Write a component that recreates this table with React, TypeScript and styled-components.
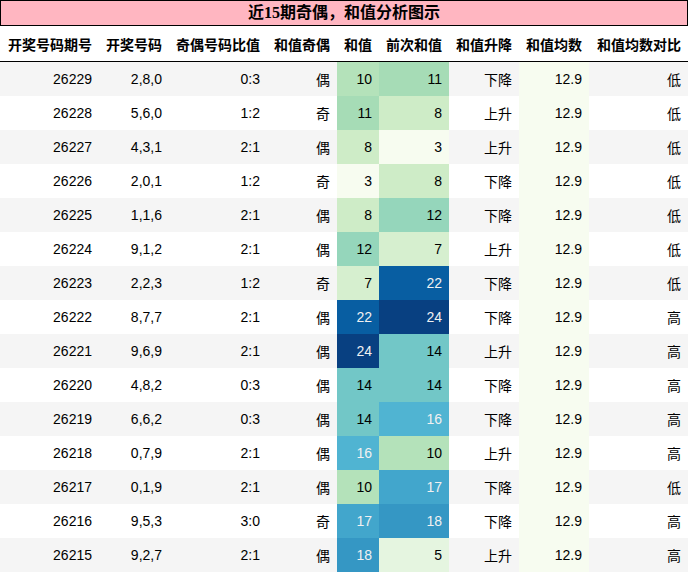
import React from "react";
import styled, { createGlobalStyle } from "styled-components";

const Global = createGlobalStyle`
  html, body { margin: 0; padding: 0; background: #ffffff; }
  body { font-family: "Liberation Sans", "Noto Sans CJK SC", Arial, sans-serif; }
`;

const Wrapper = styled.div`
  width: 688px;
`;

const Title = styled.div`
  box-sizing: border-box;
  height: 26px;
  border: 1px solid #000;
  background: #ffb6c1;
  color: #000;
  font-family: "Liberation Serif", "Noto Sans CJK SC", serif;
  font-weight: bold;
  font-size: 16px;
  line-height: 24px;
  text-align: center;
`;

const Table = styled.table`
  width: 688px;
  border-collapse: collapse;
  border-spacing: 0;
  table-layout: fixed;
`;

const Col = styled.col<{ $w: number }>`
  width: ${(p) => p.$w}px;
`;

const HeadCell = styled.th`
  height: 35px;
  padding: 0 7px 0 0;
  text-align: right;
  vertical-align: middle;
  font-family: "Liberation Sans", "Noto Sans CJK SC", sans-serif;
  font-size: 14px;
  font-weight: bold;
  color: #000;
  white-space: nowrap;
  border-bottom: 1px solid #000;
`;

const Row = styled.tr`
  &:nth-child(odd) { background: #f5f5f5; }
  &:nth-child(even) { background: #ffffff; }
`;

const Cell = styled.td`
  height: 34px;
  padding: 0 7px 0 0;
  text-align: right;
  vertical-align: middle;
  font-size: 14px;
  color: #000;
  white-space: nowrap;
`;

const GNBU = [
  [247, 252, 240],
  [224, 243, 219],
  [204, 235, 197],
  [168, 221, 181],
  [123, 204, 196],
  [78, 179, 211],
  [43, 140, 190],
  [8, 104, 172],
  [8, 64, 129],
];

function gnbu(t: number): [number, number, number] {
  const x = Math.max(0, Math.min(1, t)) * 8;
  const i = Math.min(7, Math.floor(x));
  const f = x - i;
  const a = GNBU[i];
  const b = GNBU[i + 1];
  return [0, 1, 2].map((k) => Math.round(a[k] + (b[k] - a[k]) * f)) as [number, number, number];
}

function lum(c: number) {
  const v = c / 255;
  return v <= 0.03928 ? v / 12.92 : Math.pow((v + 0.055) / 1.055, 2.4);
}

function gradStyle(v: number, min: number, max: number): React.CSSProperties {
  const t = max === min ? 0 : (v - min) / (max - min);
  const [r, g, b] = gnbu(t);
  const L = 0.2126 * lum(r) + 0.7152 * lum(g) + 0.0722 * lum(b);
  return { background: `rgb(${r},${g},${b})`, color: L < 0.408 ? "#f1f1f1" : "#000000" };
}

type RowData = [number, string, string, string, number, number, string, number, string];

const rows: RowData[] = [
  [26229, "2,8,0", "0:3", "偶", 10, 11, "下降", 12.9, "低"],
  [26228, "5,6,0", "1:2", "奇", 11, 8, "上升", 12.9, "低"],
  [26227, "4,3,1", "2:1", "偶", 8, 3, "上升", 12.9, "低"],
  [26226, "2,0,1", "1:2", "奇", 3, 8, "下降", 12.9, "低"],
  [26225, "1,1,6", "2:1", "偶", 8, 12, "下降", 12.9, "低"],
  [26224, "9,1,2", "2:1", "偶", 12, 7, "上升", 12.9, "低"],
  [26223, "2,2,3", "1:2", "奇", 7, 22, "下降", 12.9, "低"],
  [26222, "8,7,7", "2:1", "偶", 22, 24, "下降", 12.9, "高"],
  [26221, "9,6,9", "2:1", "偶", 24, 14, "上升", 12.9, "高"],
  [26220, "4,8,2", "0:3", "偶", 14, 14, "下降", 12.9, "高"],
  [26219, "6,6,2", "0:3", "偶", 14, 16, "下降", 12.9, "高"],
  [26218, "0,7,9", "2:1", "偶", 16, 10, "上升", 12.9, "高"],
  [26217, "0,1,9", "2:1", "偶", 10, 17, "下降", 12.9, "低"],
  [26216, "9,5,3", "3:0", "奇", 17, 18, "下降", 12.9, "高"],
  [26215, "9,2,7", "2:1", "偶", 18, 5, "上升", 12.9, "高"],
];

const headers = ["开奖号码期号", "开奖号码", "奇偶号码比值", "和值奇偶", "和值", "前次和值", "和值升降", "和值均数", "和值均数对比"];
const widths = [99, 70, 98, 70, 42, 70, 70, 70, 99];

const gradCols = [4, 5, 7];

export default function App() {
  const ranges: Record<number, [number, number]> = {};
  gradCols.forEach((c) => {
    const vals = rows.map((r) => r[c] as number);
    ranges[c] = [Math.min(...vals), Math.max(...vals)];
  });
  return (
    <>
      <Global />
      <Wrapper>
        <Title>近15期奇偶，和值分析图示</Title>
        <Table>
          <colgroup>
            {widths.map((w, i) => (
              <Col key={i} $w={w} />
            ))}
          </colgroup>
          <thead>
            <tr>
              {headers.map((h) => (
                <HeadCell key={h}>{h}</HeadCell>
              ))}
            </tr>
          </thead>
          <tbody>
            {rows.map((r) => (
              <Row key={r[0]}>
                {r.map((v, i) => (
                  <Cell
                    key={i}
                    style={gradCols.includes(i) ? gradStyle(v as number, ranges[i][0], ranges[i][1]) : undefined}
                  >
                    {v}
                  </Cell>
                ))}
              </Row>
            ))}
          </tbody>
        </Table>
      </Wrapper>
    </>
  );
}
